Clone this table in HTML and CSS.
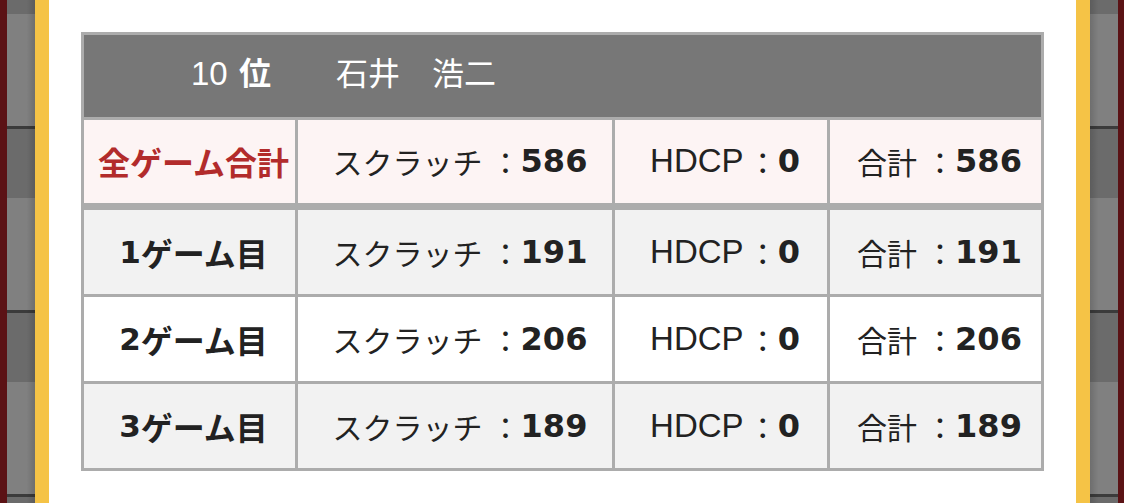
FILE: index.html
```html
<!DOCTYPE html>
<html lang="ja">
<head>
<meta charset="utf-8">
<title>スコア</title>
<link rel="stylesheet" href="styles.css">
</head>
<body>
  <div class="wall"></div>
  <div class="rail rail-left"></div>
  <div class="trim"></div>
  <main class="sheet">
    <div class="board">
      <div class="title"><span class="rank"><span class="lat">10</span> <b>位</b></span><span class="name">石井　浩二</span></div>

      <div class="cell total label-red">全ゲーム合計</div>
      <div class="cell total wide">スクラッチ<span class="sep">：</span><b class="num">586</b></div>
      <div class="cell total"><span class="lat">HDCP</span><span class="sep sep-lat">：</span><b class="num">0</b></div>
      <div class="cell total">合計<span class="sep">：</span><b class="num">586</b></div>

      <div class="cell alt label"><span class="num">1</span>ゲーム目</div>
      <div class="cell alt wide">スクラッチ<span class="sep">：</span><b class="num">191</b></div>
      <div class="cell alt"><span class="lat">HDCP</span><span class="sep sep-lat">：</span><b class="num">0</b></div>
      <div class="cell alt">合計<span class="sep">：</span><b class="num">191</b></div>

      <div class="cell label"><span class="num">2</span>ゲーム目</div>
      <div class="cell wide">スクラッチ<span class="sep">：</span><b class="num">206</b></div>
      <div class="cell"><span class="lat">HDCP</span><span class="sep sep-lat">：</span><b class="num">0</b></div>
      <div class="cell">合計<span class="sep">：</span><b class="num">206</b></div>

      <div class="cell alt label"><span class="num">3</span>ゲーム目</div>
      <div class="cell alt wide">スクラッチ<span class="sep">：</span><b class="num">189</b></div>
      <div class="cell alt"><span class="lat">HDCP</span><span class="sep sep-lat">：</span><b class="num">0</b></div>
      <div class="cell alt">合計<span class="sep">：</span><b class="num">189</b></div>
    </div>
  </main>
  <div class="trim"></div>
  <div class="rail rail-right"></div>
  <div class="wall wall-right"></div>
</body>
</html>
```
FILE: styles.css
```css
html, body {
  margin: 0;
  padding: 0;
  height: 100%;
}
body {
  display: flex;
  width: 1124px;
  height: 503px;
  overflow: hidden;
  font-family: "Noto Sans CJK JP", "Noto Sans", sans-serif;
  color: #222;
}
.wall {
  width: 7px;
  flex: none;
  background: #5b1215;
}
.wall-right {
  width: 6px;
}
.rail {
  width: 28px;
  flex: none;
  background-image:
    linear-gradient(to right, rgba(0,0,0,0) 70%, rgba(0,0,0,0.14)),
    linear-gradient(to bottom, #3b3b3b 0 3px, #6b6b6b 3px 72px, #808080 72px 184px);
  background-size: 100% 100%, 100% 184px;
  background-repeat: no-repeat, repeat-y;
  background-position: 0 0, 0 126px;
}
.rail-right {
  background-image:
    linear-gradient(to left, rgba(0,0,0,0) 70%, rgba(0,0,0,0.14)),
    linear-gradient(to bottom, #3b3b3b 0 3px, #6b6b6b 3px 72px, #808080 72px 184px);
}
.trim {
  width: 14px;
  flex: none;
  background: #f5c346;
}
.sheet {
  flex: 1;
  background: #fff;
  padding: 32px 32px 0;
}
.board {
  display: grid;
  grid-template-columns: 211px 314px 212px 211px;
  gap: 3px;
  padding: 3px;
  background: #acacac;
  width: max-content;
}
.title {
  grid-column: 1 / -1;
  box-sizing: border-box;
  height: 82px;
  background: #777;
  color: #fff;
  font-size: 32px;
  display: flex;
  align-items: center;
  padding-left: 107px;
  padding-bottom: 11px;
}
.title b {
  font-weight: 700;
  margin-left: 4px;
}
.title .lat {
  font-size: 33px;
}
.name {
  margin-left: 65px;
}
.cell {
  box-sizing: border-box;
  height: 84px;
  padding-bottom: 1px;
  padding-left: 8px;
  display: flex;
  align-items: center;
  justify-content: center;
  font-size: 30px;
  background: #fff;
  white-space: nowrap;
}
.wide {
  padding-left: 10px;
}
.cell b {
  font-weight: 700;
}
.sep {
  margin-left: 8px;
}
.sep-lat {
  margin-left: 4px;
}
.num {
  font-family: "DejaVu Sans", sans-serif;
  font-size: 32px;
  font-weight: 700;
}
.lat {
  font-family: "Liberation Sans", sans-serif;
  font-size: 33px;
}
.total {
  height: 83px;
  margin-bottom: 4px;
  background: #fdf4f4;
}
.alt {
  background: #f2f2f2;
}
.label {
  font-weight: 700;
  font-size: 32px;
}
.label .num {
  font-size: 31px;
}
.label-red {
  font-weight: 700;
  font-size: 32px;
  color: #b22b2b;
}
```
